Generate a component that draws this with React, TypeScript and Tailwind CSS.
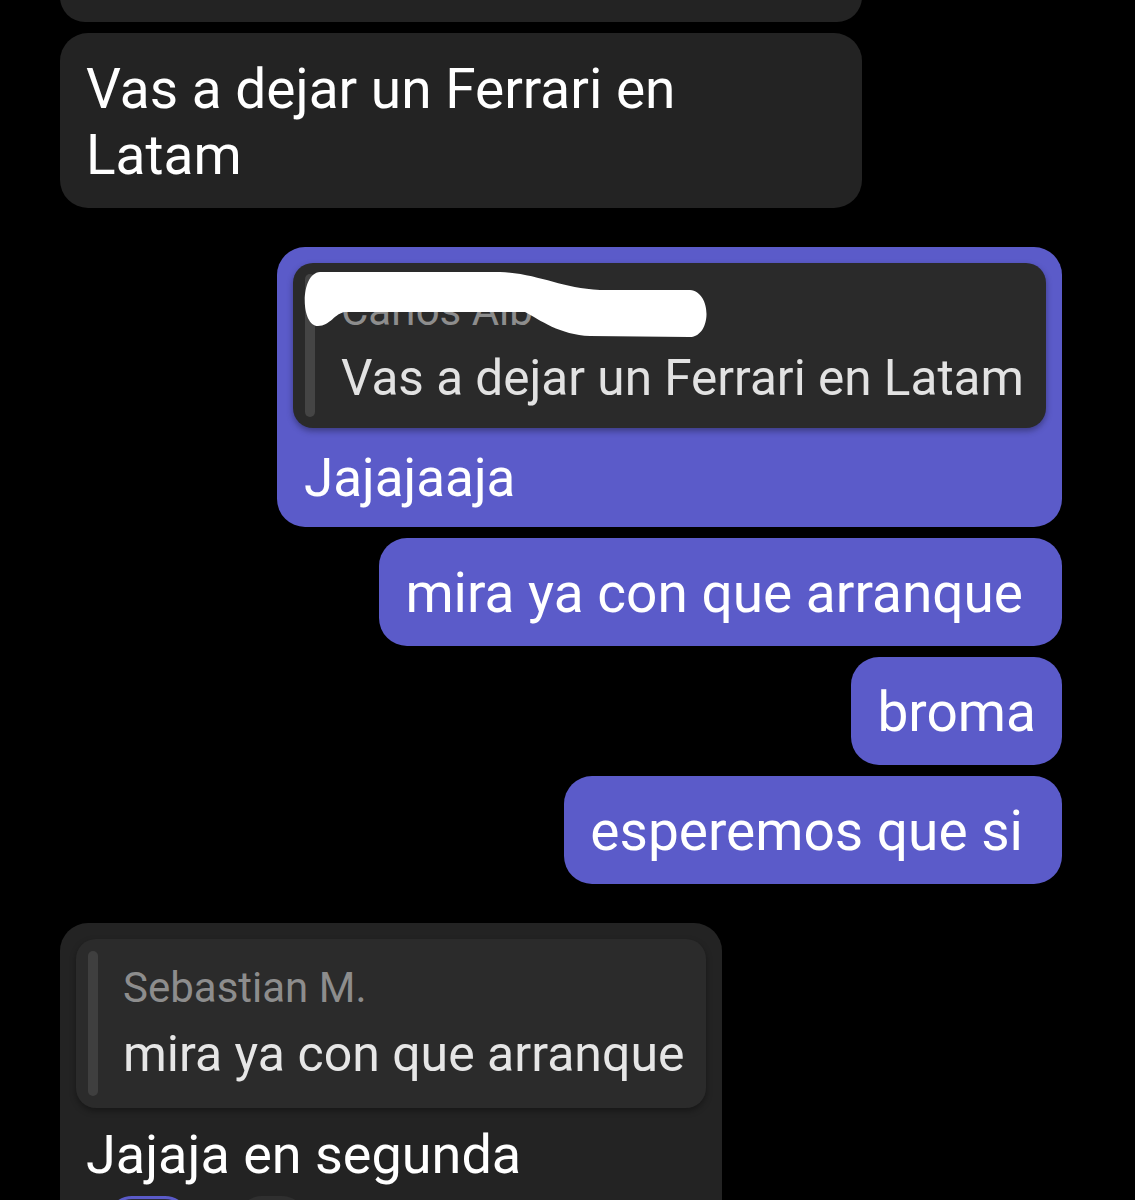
import React from "react";

type BubbleProps = {
  text: string;
  wide?: boolean;
};

const Sent = ({ text, wide }: BubbleProps) => {
  return (
    <div
      className={`mt-[11px] h-[108px] self-end whitespace-nowrap rounded-[28px] bg-[#5b5bc9] pl-[26px] pt-[22px] text-[55px] leading-[66px] ${
        wide ? "pr-[39px]" : "pr-[26px]"
      }`}
    >
      {text}
    </div>
  );
};

const Scribble = () => {
  return (
    <svg
      className="absolute left-[7px] top-[5px]"
      width="415"
      height="75"
      viewBox="0 0 415 75"
    >
      <path
        d="M 20 4 L 200 4 C 240 6, 260 20, 300 22 L 390 22 C 412 24, 412 68, 390 69 L 290 68 C 260 67, 240 52, 225 44 L 45 44 C 35 45, 30 58, 18 58 C 0 58, 0 5, 20 4 Z"
        fill="#ffffff"
      />
    </svg>
  );
};

const App = () => {
  return (
    <div className="h-[1200px] overflow-hidden bg-black font-['Roboto',sans-serif] text-white">
      <div className="flex flex-col pl-[60px] pr-[73px]">
        {/* previous message, cut off at the top */}
        <div className="-mt-[28px] h-[50px] w-[802px] rounded-[28px] bg-[#232323]" />

        <div className="mt-[11px] w-[802px] rounded-[28px] bg-[#232323] px-[26px] pb-[20px] pt-[23px] text-[55px] leading-[66px]">
          Vas a dejar un Ferrari en
          <br />
          Latam
        </div>

        {/* reply */}
        <div className="mt-[39px] w-[785px] self-end rounded-[28px] bg-[#5b5bc9] p-[16px]">
          <div className="relative flex h-[165px] rounded-[20px] bg-[#2a2a2a] py-[11px] pl-[12px] shadow-[0_3px_6px_rgba(0,0,0,0.35)]">
            <div className="w-[10px] rounded-full bg-[#454545]" />
            <div className="ml-[26px] flex flex-col pt-[12px]">
              <p className="whitespace-nowrap text-[42px] leading-[50px] text-[#8d8d8d]">
                Carlos Alb
              </p>
              <p className="mt-[12px] whitespace-nowrap text-[49.5px] leading-[60px] text-[#e2e2e2]">
                Vas a dejar un Ferrari en Latam
              </p>
            </div>
            <Scribble />
          </div>
          <p className="mt-[17px] pl-[11px] text-[53px] leading-[66px]">Jajajaaja</p>
        </div>

        <Sent text="mira ya con que arranque" wide />
        <Sent text="broma" />
        <Sent text="esperemos que si" wide />

        {/* incoming reply */}
        <div className="mt-[39px] w-[662px] rounded-[28px] bg-[#232323] p-[16px]">
          <div className="flex h-[169px] rounded-[20px] bg-[#2b2b2b] py-[12px] pl-[12px] shadow-[0_3px_6px_rgba(0,0,0,0.35)]">
            <div className="w-[10px] rounded-full bg-[#3f3f3f]" />
            <div className="ml-[25px] flex flex-col pt-[12px]">
              <p className="whitespace-nowrap text-[42px] leading-[50px] text-[#8d8d8d]">
                Sebastian M.
              </p>
              <p className="mt-[11px] whitespace-nowrap text-[50px] leading-[60px] text-[#e6e6e6]">
                mira ya con que arranque
              </p>
            </div>
          </div>
          <p className="mt-[14px] pl-[10px] text-[54px] leading-[66px]">Jajaja en segunda</p>
          <div className="mt-[8px] flex">
            <div className="ml-[31px] h-[50px] w-[83px] rounded-full border-[3px] border-[#5b5bc9] bg-[#2c2c3c]" />
            <div className="ml-[47px] h-[50px] w-[70px] rounded-full bg-[#2f2f2f]" />
          </div>
        </div>
      </div>
    </div>
  );
};

export default App;
